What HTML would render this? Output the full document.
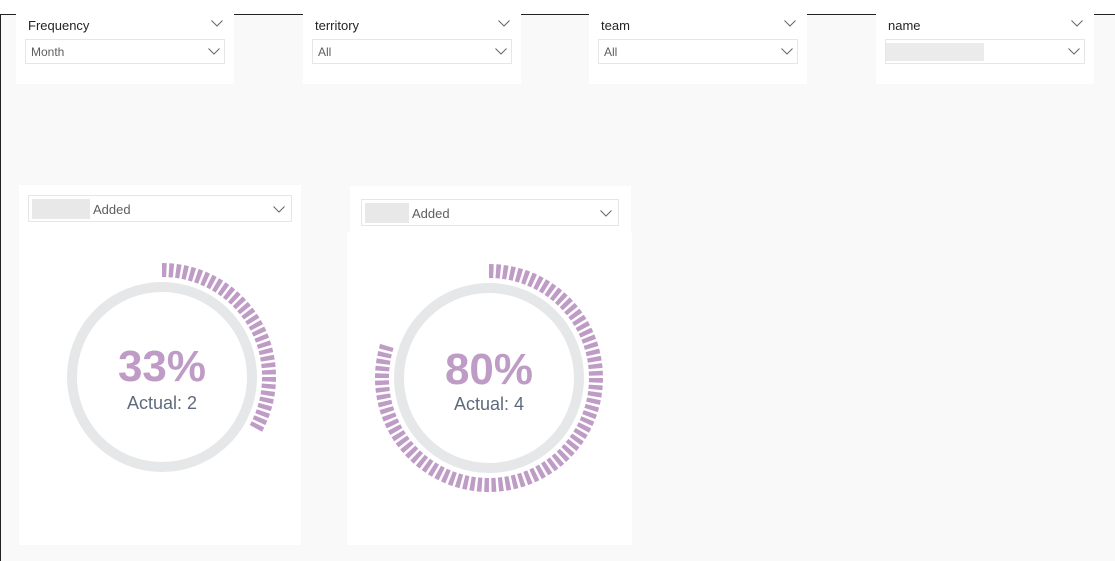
<!DOCTYPE html>
<html><head><style>
body{margin:0;width:1115px;height:561px;background:#f9f9f9;position:relative;overflow:hidden;font-family:"Liberation Sans",sans-serif}
.top{position:absolute;left:0;top:0;width:1115px;height:14px;background:#fff;border-bottom:1px solid #222}
.lft{position:absolute;left:0;top:14px;width:1px;height:547px;background:#222}
.sl{position:absolute;top:14px;width:218px;height:70px;background:#fff}
.sl .t{position:absolute;left:12px;top:4px;font-size:13px;color:#252423}
.dd{position:absolute;left:9px;top:25px;width:200px;height:25px;border:1px solid #e6e6e6;box-sizing:border-box;font-size:12px;color:#605e5c;line-height:25px;padding-left:5px}
.chev{position:absolute;width:12px;height:7px}
.card{position:absolute;background:#fff}
.add{position:absolute;height:27px;border:1px solid #e6e6e6;box-sizing:border-box;font-size:13px;color:#605e5c;line-height:27px}
.gr{display:inline-block;width:58px;height:20px;background:#e8e8e8;vertical-align:top;margin:3px 3px 0 3px}
</style></head><body>
<div class="top"></div><div class="lft"></div>
<svg width="0" height="0" style="position:absolute"><defs><symbol id="c" viewBox="0 0 12 7"><path d="M0.5 0.5L6 6L11.5 0.5" fill="none" stroke="#666" stroke-width="1"/></symbol></defs></svg>

<div class="sl" style="left:16px"><div class="t">Frequency</div><svg class="chev" style="left:195px;top:6px"><use href="#c"/></svg><div class="dd">Month<svg class="chev" style="right:4px;top:8px"><use href="#c"/></svg></div></div>
<div class="sl" style="left:303px"><div class="t">territory</div><svg class="chev" style="left:195px;top:6px"><use href="#c"/></svg><div class="dd">All<svg class="chev" style="right:4px;top:8px"><use href="#c"/></svg></div></div>
<div class="sl" style="left:589px"><div class="t">team</div><svg class="chev" style="left:195px;top:6px"><use href="#c"/></svg><div class="dd">All<svg class="chev" style="right:4px;top:8px"><use href="#c"/></svg></div></div>
<div class="sl" style="left:876px"><div class="t">name</div><svg class="chev" style="left:195px;top:6px"><use href="#c"/></svg><div class="dd" style="padding:0"><div style="position:absolute;left:0;top:3px;width:98px;height:18px;background:#ebebeb"></div><svg class="chev" style="right:4px;top:8px"><use href="#c"/></svg></div></div>

<div class="card" style="left:19px;top:185px;width:282px;height:360px"></div>
<div class="card" style="left:350px;top:186px;width:281px;height:50px"></div>
<div class="card" style="left:347px;top:232px;width:285px;height:313px"></div>

<div class="add" style="left:28px;top:195px;width:264px"><span class="gr"></span>Added<svg class="chev" style="right:6px;top:10px"><use href="#c"/></svg></div>
<div class="add" style="left:361px;top:199px;width:258px"><span class="gr" style="width:44px"></span>Added<svg class="chev" style="right:6px;top:10px"><use href="#c"/></svg></div>

<svg style="position:absolute;left:0;top:0" width="1115" height="561">
<circle cx="162" cy="377" r="90" fill="none" stroke="#e6e7e8" stroke-width="10"/>
<path d="M162 270 A107 107 0 0 1 254.7 430.5" fill="none" stroke="#bf9cc6" stroke-width="14" stroke-dasharray="4.5 2.5"/>
<text x="162" y="381" text-anchor="middle" font-size="44" font-weight="bold" fill="#bf9cc6" font-family="Liberation Sans">33%</text>
<text x="162" y="409" text-anchor="middle" font-size="18" fill="#5f6b7d" font-family="Liberation Sans">Actual: 2</text>

<circle cx="489" cy="378" r="90" fill="none" stroke="#e6e7e8" stroke-width="10"/>
<path d="M489 271 A107 107 0 1 1 387.2 345" fill="none" stroke="#bf9cc6" stroke-width="14" stroke-dasharray="4.5 2.5"/>
<text x="489" y="384" text-anchor="middle" font-size="44" font-weight="bold" fill="#bf9cc6" font-family="Liberation Sans">80%</text>
<text x="489" y="410" text-anchor="middle" font-size="18" fill="#5f6b7d" font-family="Liberation Sans">Actual: 4</text>
</svg>
</body></html>
